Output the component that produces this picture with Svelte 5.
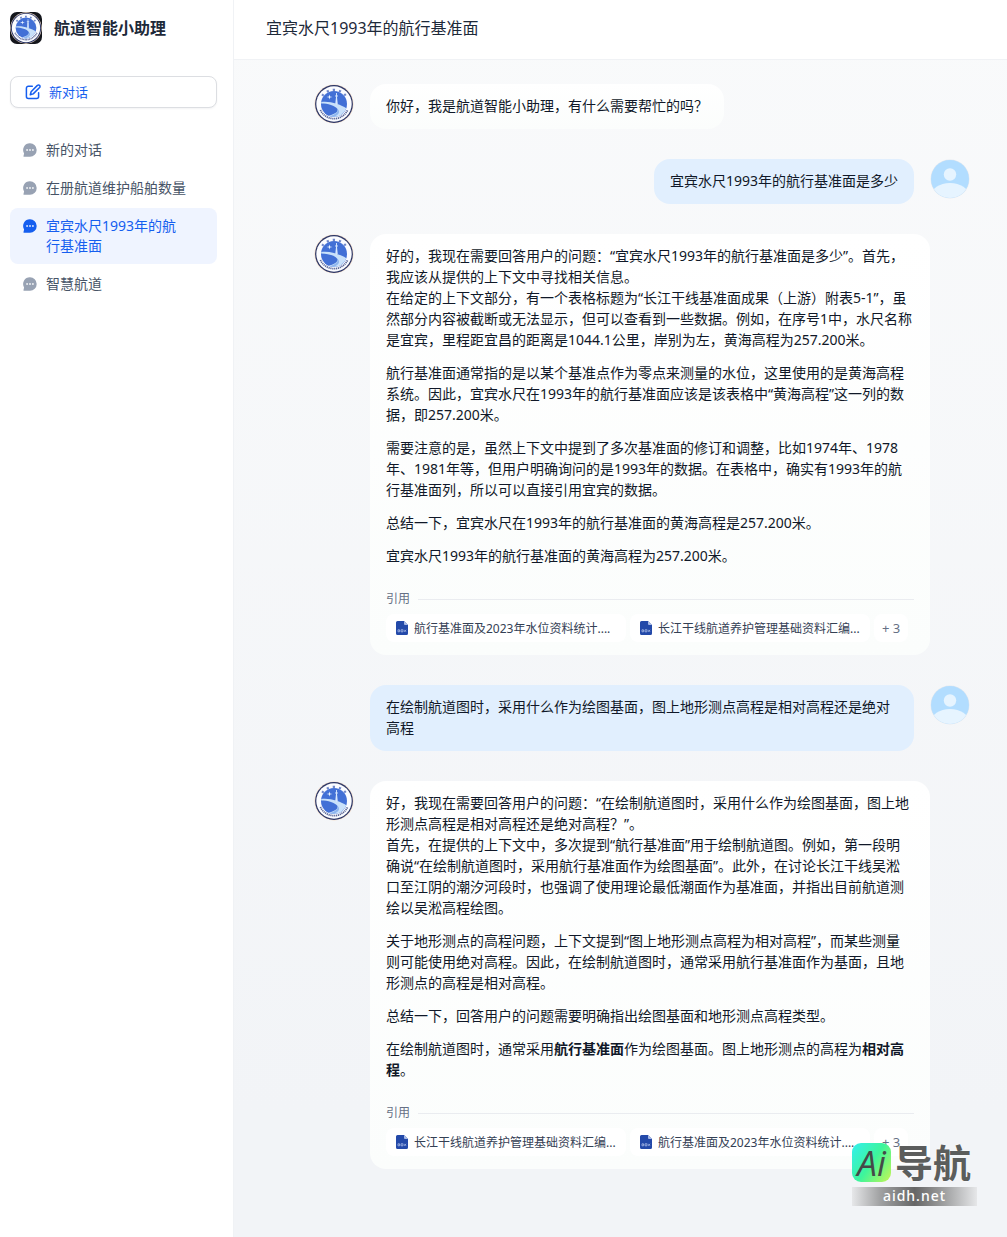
<script lang="ts">
  type Block = { text: string; bold?: boolean }[];
  type Message = {
    id: number;
    role: 'bot' | 'user';
    blocks: Block[];
    sources?: string[];
    more?: number;
  };

  const conversations = [
    { id: 1, title: '新的对话' },
    { id: 2, title: '在册航道维护船舶数量' },
    { id: 3, title: '宜宾水尺1993年的航行基准面' },
    { id: 4, title: '智慧航道' },
  ];

  let activeId = $state(3);

  const messages: Message[] = [
    { id: 1, role: 'bot', blocks: [[{ text: '你好，我是航道智能小助理，有什么需要帮忙的吗？' }]] },
    { id: 2, role: 'user', blocks: [[{ text: '宜宾水尺1993年的航行基准面是多少' }]] },
    {
      id: 3,
      role: 'bot',
      blocks: [
        [{ text: '好的，我现在需要回答用户的问题：“宜宾水尺1993年的航行基准面是多少”。首先，我应该从提供的上下文中寻找相关信息。\n在给定的上下文部分，有一个表格标题为“长江干线基准面成果（上游）附表5-1”，虽然部分内容被截断或无法显示，但可以查看到一些数据。例如，在序号1中，水尺名称是宜宾，里程距宜昌的距离是1044.1公里，岸别为左，黄海高程为257.200米。' }],
        [{ text: '航行基准面通常指的是以某个基准点作为零点来测量的水位，这里使用的是黄海高程系统。因此，宜宾水尺在1993年的航行基准面应该是该表格中“黄海高程”这一列的数据，即257.200米。' }],
        [{ text: '需要注意的是，虽然上下文中提到了多次基准面的修订和调整，比如1974年、1978年、1981年等，但用户明确询问的是1993年的数据。在表格中，确实有1993年的航行基准面列，所以可以直接引用宜宾的数据。' }],
        [{ text: '总结一下，宜宾水尺在1993年的航行基准面的黄海高程是257.200米。' }],
        [{ text: '宜宾水尺1993年的航行基准面的黄海高程为257.200米。' }],
      ],
      sources: ['航行基准面及2023年水位资料统计....', '长江干线航道养护管理基础资料汇编...'],
      more: 3,
    },
    { id: 4, role: 'user', blocks: [[{ text: '在绘制航道图时，采用什么作为绘图基面，图上地形测点高程是相对高程还是绝对高程' }]] },
    {
      id: 5,
      role: 'bot',
      blocks: [
        [{ text: '好，我现在需要回答用户的问题：“在绘制航道图时，采用什么作为绘图基面，图上地形测点高程是相对高程还是绝对高程？”。\n首先，在提供的上下文中，多次提到“航行基准面”用于绘制航道图。例如，第一段明确说“在绘制航道图时，采用航行基准面作为绘图基面”。此外，在讨论长江干线吴淞口至江阴的潮汐河段时，也强调了使用理论最低潮面作为基准面，并指出目前航道测绘以吴淞高程绘图。' }],
        [{ text: '关于地形测点的高程问题，上下文提到“图上地形测点高程为相对高程”，而某些测量则可能使用绝对高程。因此，在绘制航道图时，通常采用航行基准面作为基面，且地形测点的高程是相对高程。' }],
        [{ text: '总结一下，回答用户的问题需要明确指出绘图基面和地形测点高程类型。' }],
        [
          { text: '在绘制航道图时，通常采用' },
          { text: '航行基准面', bold: true },
          { text: '作为绘图基面。图上地形测点的高程为' },
          { text: '相对高程', bold: true },
          { text: '。' },
        ],
      ],
      sources: ['长江干线航道养护管理基础资料汇编...', '航行基准面及2023年水位资料统计....'],
      more: 3,
    },
  ];
</script>

{#snippet emblem()}
  <svg viewBox="0 0 40 40" aria-hidden="true">
    <circle cx="20" cy="20" r="19.6" fill="#f6e0cc" />
    <circle cx="20" cy="20" r="18.9" fill="#2a3566" />
    <circle cx="20" cy="20" r="17.7" fill="#fbfcff" />
    <path d="M6.4 26A15 15 0 0 0 33.600 26" fill="none" stroke="#5a6797" stroke-width="1.800" stroke-dasharray="1.200 0.700" />
    <path d="M8.200 11.800A14.600 14.600 0 0 1 31.800 11.800" fill="none" stroke="#6f86c9" stroke-width="2.200" stroke-dasharray="2.200 4" />
    <circle cx="20" cy="20" r="13" fill="#4270d6" />
    <path d="M7.200 18C15 16.500 27 20.500 32.300 24.200C31 27.500 28.500 30.500 25 32C21 33.300 18 33.200 14.500 31.800C20 30.500 24.500 28 23.500 25C21 21.500 14 19.500 7.200 19.500Z" fill="#c9e1fa" />
    <path d="M23.500 25C24.500 28 21 30.500 16 32.200L20 33C24 31 27 28 23.500 25Z" fill="#8fb6ee" />
    <path d="M22.500 20.500V9M21 12H24M21.700 20L22.500 13L23.300 20" stroke="#dcecff" stroke-width="0.900" fill="none" />
    <path d="M15.500 10.500L16.100 12.400L18.500 13L16.100 13.600L15.500 15.500L14.900 13.600L12.500 13L14.900 12.400Z" fill="#e9f3ff" />
  </svg>
{/snippet}

{#snippet docIcon()}
  <svg class="doc" viewBox="0 0 12 14" aria-hidden="true">
    <path d="M1.500 0H8L12 4V12.500A1.500 1.500 0 0 1 10.500 14H1.500A1.500 1.500 0 0 1 0 12.500V1.500A1.500 1.500 0 0 1 1.500 0Z" fill="#2349a9" />
    <path d="M8 0L12 4H9A1 1 0 0 1 8 3Z" fill="#a9bbe6" />
    <path d="M2 8.800H3.500V10.800H2ZM5 8.800H7V10.800H5ZM8.300 8.800L10 10.800M10 8.800L8.300 10.800" fill="none" stroke="#a9bbe6" stroke-width="0.800" />
  </svg>
{/snippet}

<div class="layout">
  <aside>
    <div class="brand">
      <span class="brand-logo">{@render emblem()}</span>
      <h1>航道智能小助理</h1>
    </div>
    <button type="button" class="new-chat">
      <svg viewBox="0 0 16 16" aria-hidden="true">
        <path d="M7.300 2.200H3.400A2 2 0 0 0 1.400 4.200V12.600A2 2 0 0 0 3.400 14.600H11.600A2 2 0 0 0 13.600 12.600V8.700" />
        <path d="M12.400 1.400A1.480 1.480 0 0 1 14.600 3.500L8.200 9.900L5.300 10.700L6.100 7.800Z" />
      </svg>
      新对话
    </button>
    <nav>
      {#each conversations as item (item.id)}
        <button type="button" class="conversation" class:active={item.id === activeId} onclick={() => (activeId = item.id)}>
          <svg viewBox="0 0 14 14" aria-hidden="true">
            <path d="M7 0.300A6.700 6.700 0 1 1 7 13.700H1.200Q0.300 13.700 0.500 12.900L1.100 10.400A6.700 6.700 0 0 1 7 0.300Z" fill="currentColor" />
            <path d="M3.300 6.200H4.900V7.800H3.300ZM6.200 6.200H7.800V7.800H6.200ZM9.100 6.200H10.700V7.800H9.100Z" fill="#fff" />
          </svg>
          <span>{item.title}</span>
        </button>
      {/each}
    </nav>
  </aside>

  <main>
    <header>宜宾水尺1993年的航行基准面</header>
    <div class="chat">
      {#each messages as message (message.id)}
        <div class="row {message.role}">
          {#if message.role === 'bot'}
            <span class="avatar">{@render emblem()}</span>
          {/if}
          <div class="bubble">
            {#each message.blocks as block}
              <p>{#each block as part}{#if part.bold}<strong>{part.text}</strong>{:else}{part.text}{/if}{/each}</p>
            {/each}
            {#if message.sources}
              <div class="cite-title">引用</div>
              <div class="sources">
                {#each message.sources as source}
                  <button type="button" class="source">{@render docIcon()}<span>{source}</span></button>
                {/each}
                <button type="button" class="more">+ {message.more}</button>
              </div>
            {/if}
          </div>
          {#if message.role === 'user'}
            <svg class="avatar" viewBox="0 0 40 40" aria-hidden="true">
              <defs>
                <clipPath id="face-{message.id}"><circle cx="20" cy="20" r="19" /></clipPath>
              </defs>
              <circle cx="20" cy="20" r="19.500" fill="#e4e9ef" />
              <g clip-path="url(#face-{message.id})">
                <rect width="40" height="40" fill="#b2ddff" />
                <circle cx="20" cy="15.500" r="6.200" fill="#e6f4ff" />
                <ellipse cx="20" cy="37" rx="19" ry="13" fill="#e6f4ff" />
              </g>
            </svg>
          {/if}
        </div>
      {/each}
    </div>
  </main>

  <div class="watermark">
    <div class="mark-top">
      <span class="mark-ai">Ai</span>
      <span class="mark-name">导航</span>
    </div>
    <div class="mark-url">aidh.net</div>
  </div>
</div>

<style>
  :global(body) {
    background: #fff;
  }
  .layout {
    position: relative;
    display: flex;
    min-height: 100vh;
    font-family: "Noto Sans", "Noto Sans CJK SC", sans-serif;
    font-size: 14px;
    line-height: 21px;
    color: #101828;
  }
  button {
    font: inherit;
    text-align: left;
    cursor: pointer;
  }
  svg {
    display: block;
    flex-shrink: 0;
  }
  aside {
    box-sizing: border-box;
    flex: 0 0 234px;
    padding: 12px 16px 12px 10px;
    background: #fff;
    border-right: 1px solid #f0f2f5;
  }
  .brand {
    display: flex;
    align-items: center;
    gap: 12px;
    margin-bottom: 32px;
  }
  .brand-logo {
    box-sizing: border-box;
    width: 32px;
    height: 32px;
    border-radius: 7px;
    background: #14161c;
    overflow: hidden;
  }
  h1 {
    margin: 0;
    font-size: 16px;
    line-height: 24px;
    font-weight: 600;
    color: #1d2939;
  }
  .new-chat {
    box-sizing: border-box;
    display: flex;
    align-items: center;
    gap: 8px;
    width: 100%;
    height: 32px;
    padding: 0 14px;
    border: 1px solid #dcdee2;
    border-radius: 8px;
    background: #fff;
    box-shadow: 0 1px 2px rgba(16, 24, 40, 0.05);
    font-size: 13px;
    color: #155eef;
  }
  .new-chat svg {
    width: 16px;
    height: 16px;
    fill: none;
    stroke: currentColor;
    stroke-width: 1.5;
    stroke-linejoin: round;
    stroke-linecap: round;
  }
  nav {
    display: flex;
    flex-direction: column;
    gap: 2px;
    margin-top: 24px;
  }
  .conversation {
    display: flex;
    gap: 9px;
    padding: 8px 36px 8px 13px;
    border: 0;
    border-radius: 8px;
    background: none;
    line-height: 20px;
    color: #98a2b3;
  }
  .conversation svg {
    width: 14px;
    height: 14px;
    margin-top: 3px;
  }
  .conversation span {
    color: #475467;
    word-break: break-all;
  }
  .conversation:not(.active) {
    padding-right: 8px;
  }
  .conversation.active {
    background: #eff4ff;
    color: #155eef;
  }
  .conversation.active span {
    color: #155eef;
  }
  main {
    flex: 1;
    min-width: 0;
    background: linear-gradient(180deg, #f9fafb 0%, #f2f4f7 90%);
  }
  header {
    padding: 17px 32px 19px;
    border-bottom: 1px solid #f0f2f5;
    background: #fff;
    font-size: 16px;
    line-height: 23px;
    color: #1d2939;
  }
  .chat {
    display: flex;
    flex-direction: column;
    gap: 30px;
    padding: 24px 37px 68px 80px;
  }
  .row {
    display: flex;
    align-items: flex-start;
    gap: 16px;
  }
  .row.bot {
    padding-right: 40px;
  }
  .row.user {
    justify-content: flex-end;
    padding-left: 56px;
  }
  .avatar {
    flex: 0 0 40px;
    width: 40px;
    height: 40px;
  }
  .bubble {
    min-width: 0;
    padding: 11px 16px 13px;
    border-radius: 16px;
  }
  .bot .bubble {
    background: linear-gradient(180deg, #fff, #fbfdfc);
  }
  .user .bubble {
    background: #e1effe;
  }
  p {
    margin: 0;
    white-space: pre-line;
  }
  p + p {
    margin-top: 12px;
  }
  strong {
    font-weight: 700;
  }
  .cite-title {
    display: flex;
    align-items: center;
    gap: 8px;
    margin-top: 24px;
    font-size: 12px;
    line-height: 18px;
    color: #667085;
  }
  .cite-title::after {
    content: "";
    flex: 1;
    height: 1px;
    background: #eaecf0;
  }
  .sources {
    display: flex;
    gap: 4px;
    margin-top: 6px;
  }
  .source,
  .more {
    display: flex;
    align-items: center;
    gap: 6px;
    height: 28px;
    padding: 0 10px;
    border: 0;
    border-radius: 8px;
    background: #fff;
    font-size: 12px;
    color: #344054;
    white-space: nowrap;
  }
  .source {
    box-sizing: border-box;
    width: 240px;
  }
  .source span {
    overflow: hidden;
  }
  .more {
    padding: 0 8px;
    font-size: 13px;
    color: #667085;
  }
  .doc {
    width: 12px;
    height: 14px;
  }
  .watermark {
    position: absolute;
    right: 30px;
    bottom: 31px;
    width: 125px;
  }
  .mark-top {
    display: flex;
    align-items: flex-start;
    gap: 4px;
    height: 40px;
    color: #5b5d5c;
    font-weight: 700;
    white-space: nowrap;
  }
  .mark-ai {
    width: 39px;
    height: 39px;
    border-radius: 9px;
    background: linear-gradient(125deg, #34f0e6 5%, #3df59c 50%, #b8f65a 95%);
    font-family: "Open Sans", sans-serif;
    font-size: 35px;
    font-style: italic;
    font-weight: 500;
    line-height: 39px;
    text-align: center;
    color: #454948;
  }
  .mark-name {
    font-family: "Noto Sans CJK SC", sans-serif;
    font-size: 38px;
    line-height: 36px;
    text-shadow: 0 0 2px #fff;
  }
  .mark-url {
    height: 19px;
    margin-top: 4px;
    background: linear-gradient(90deg, #e6e7e9, #a2a3a4 22%, #666 50%, #a2a3a4 75%, #e6e7e9);
    font-size: 14px;
    font-weight: 500;
    line-height: 18px;
    letter-spacing: 1px;
    text-align: center;
    color: #fff;
  }
</style>
